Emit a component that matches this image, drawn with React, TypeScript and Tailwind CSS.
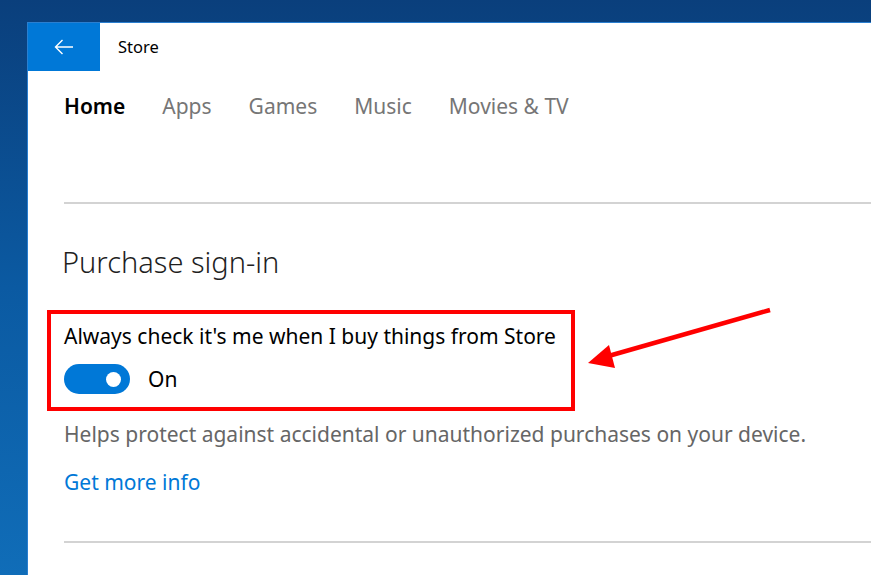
import React from 'react';

const tabs = ['Home', 'Apps', 'Games', 'Music', 'Movies & TV'];

export default function App() {
  return (
    <div
      className="relative w-[871px] h-[575px] overflow-hidden pl-[27px] pt-[22px] bg-gradient-to-b from-[#0a3f7c] via-[#0b5aa2] to-[#106db8]"
      style={{ fontFamily: '"Noto Sans", "Open Sans", sans-serif' }}
    >
      <div className="w-full h-full bg-white border-t border-l border-[#2a7fd0]">
        {/* title bar */}
        <div className="flex items-center h-[48px]">
          <div className="w-[72px] h-[48px] bg-[#0078d7] flex items-center justify-center">
            <svg width="20" height="16" viewBox="0 0 20 16" fill="none" stroke="white" strokeWidth="1.4">
              <path d="M19 8H1.5M8.5 1L1.5 8l7 7" />
            </svg>
          </div>
          <span className="ml-[18px] text-[16.5px] text-black">Store</span>
        </div>

        {/* nav */}
        <div className="flex gap-[37px] pl-[36px] pt-[21px] text-[21px] leading-[28px]">
          {tabs.map((t, i) => (
            <span key={t} className={i === 0 ? 'font-semibold text-black' : 'text-[#767676]'}>
              {t}
            </span>
          ))}
        </div>

        <div className="ml-[36px] mt-[82px] h-[2px] bg-[#d3d3d3]" />

        <div className="pl-[34px] pt-[40px]">
          <h1 className="text-[29px] leading-[36px] text-[#1f1f1f] font-light">Purchase sign-in</h1>
        </div>

        <div className="pl-[19px] mt-[30px]">
          <div className="w-[528px] h-[101px] border-4 border-[#ff0000] pl-[13px] pt-[8px]">
            <div className="text-[21px] leading-[28px] text-black">Always check it's me when I buy things from Store</div>
            <div className="flex items-center mt-[14px]">
              <div className="w-[66px] h-[30px] rounded-full bg-[#0078d7] flex items-center justify-end pr-[9px]">
                <div className="w-[15px] h-[15px] rounded-full bg-white" />
              </div>
              <span className="ml-[18px] text-[21px] leading-[28px] text-black">On</span>
            </div>
          </div>
        </div>

        <div className="pl-[36px] mt-[9px] text-[21px] leading-[28px] text-[#666666]">
          Helps protect against accidental or unauthorized purchases on your device.
        </div>
        <div className="pl-[36px] mt-[20px] text-[21px] leading-[28px] text-[#0078d7]">Get more info</div>

        <div className="ml-[36px] mt-[45px] h-[2px] bg-[#d3d3d3]" />
      </div>

      {/* annotation arrow */}
      <svg className="absolute left-0 top-0" width="871" height="575" viewBox="0 0 871 575">
        <line x1="770" y1="310" x2="605" y2="357" stroke="#ff0000" strokeWidth="4.5" />
        <polygon points="588,363 609,345 615,368" fill="#ff0000" />
      </svg>
    </div>
  );
}
